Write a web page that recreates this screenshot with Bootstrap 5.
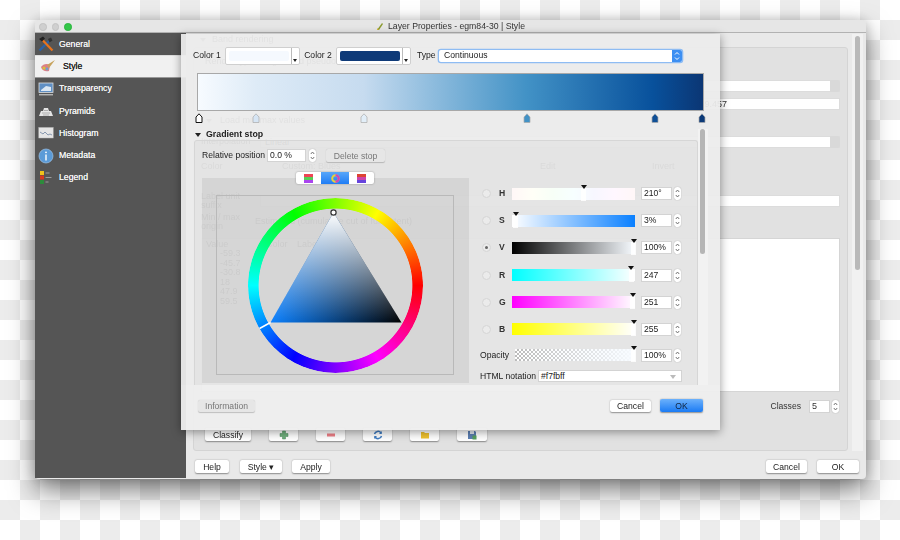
<!DOCTYPE html>
<html lang="en">
<head>
<meta charset="UTF-8">
<title>Layer Properties</title>
<link href="https://cdn.jsdelivr.net/npm/bootstrap@5.3.0/dist/css/bootstrap.min.css" rel="stylesheet">
<style>
  html, body { height: 100%; }
  body {
    margin: 0; overflow: hidden; font-family: "Liberation Sans", Arial, sans-serif; font-size: 8.5px; color: #222;
    background: conic-gradient(#ececec 25%, #fff 0 50%, #ececec 0 75%, #fff 0) 0 0 / 40px 40px;
  }
  .scene { position: relative; width: 900px; height: 540px; filter: blur(.45px); }

  /* main window */
  .win { position: absolute; left: 35px; top: 20px; width: 831px; height: 459px; background: #e9e9e9; border-radius: 4px; box-shadow: 0 12px 26px rgba(0,0,0,.5), 0 0 12px rgba(0,0,0,.18); }
  .titlebar { height: 13px; position: relative; background: #e6e6e6; border-bottom: 1px solid #b2b2b2; border-radius: 4px 4px 0 0; font-size: 8.7px; color: #333; padding-top: 1px; }
  .lights { position: absolute; left: 4px; top: 3px; gap: 5px; }
  .lights i { width: 7.5px; height: 7.5px; border-radius: 50%; background: #cfcfcf; border: 1px solid #c2c2c2; display: block; }
  .lights i.on { background: #33c748; border-color: #2bb53f; }
  .sidebar { width: 151px; background: #555; color: #f2f2f2; flex: none; }
  .side-item { height: 22.3px; padding-left: 3px; gap: 5px; font-size: 8.7px; text-shadow: 0 0 .5px #fff; }
  .side-item svg { width: 16px; height: 16px; flex: none; }
  .side-item.active { background: #f1f1f1; color: #222; padding-left: 5px; border-top: 1px solid #ddd; border-bottom: 1px solid #999; gap: 7px; text-shadow: 0 0 .5px #222; }

  /* the panel behind the dialog */
  .under { flex: 1; min-width: 0; position: relative; font-size: 9px; color: #333; }
  .under-scroll { height: 418px; padding-left: 7px; padding-right: 3px; }
  .under-col { flex: 1; min-width: 0; }
  .under-head { height: 14px; padding-left: 7px; gap: 6px; }
  .under-group { height: 404px; background: #e1e1e1; border: 1px solid #d4d4d4; border-radius: 3px; width: 655px; padding: 7px 7px 0 7px; }
  .urow { height: 14px; }
  .field { background: #fff; border: 1px solid #dcdcdc; height: 12px; line-height: 10px; }
  .u-combo { position: relative; }
  .u-combo::after { content: ""; position: absolute; right: -1px; top: -1px; bottom: -1px; width: 10px; background: #d9d9d9; border-radius: 0 3px 3px 0; }
  .u-scroll { width: 11px; margin-left: 3px; background: #f1f1f1; margin-top: 1px; position: relative; }
  .u-scroll::before { content: ""; position: absolute; left: 3px; top: 2px; width: 5px; height: 234px; border-radius: 3px; background: #b9b9b9; }
  .table-box { height: 154px; background: #fff; border: 1px solid #d5d5d5; }
  .under-foot { height: 27px; padding: 9px 7px 0 9px; }

  .qbtn { font-size: 8.6px; height: 13px; line-height: 12px; padding: 0; background: #fff; border: 0; border-radius: 2px; color: #222; box-shadow: 0 .5px 1.5px rgba(0,0,0,.4); flex: none; }
  .qbtn:disabled { background: #e6e6e6; color: #777; opacity: 1; box-shadow: 0 .5px 1px rgba(0,0,0,.2); }
  .qbtn.primary { background: linear-gradient(#6cb1fb, #1b7bf4); color: #10243e; }
  .qbtn svg { width: 10px; height: 10px; display: block; margin: 1.5px auto 0; }

  /* colour ramp dialog */
  .dlg { position: absolute; left: 146px; top: 14px; width: 539px; height: 396px; background: rgba(236,236,236,.945); box-shadow: 0 2px 9px rgba(0,0,0,.4); font-size: 8.6px; }
  .dlg-top { height: 18px; margin: 13px 0 0 12px; }
  .lbl { margin-bottom: 2px; flex: none; }
  .colbtn { height: 18px; width: 75px; background: #fff; border: 1px solid #cfcfcf; border-radius: 2px; position: relative; padding: 3px 10px 3px 3px; flex: none; }
  .colbtn b { display: block; height: 100%; border-radius: 2px; }
  .colbtn::after { content: ""; position: absolute; right: 0; top: 0; bottom: 0; width: 8px; border-left: 1px solid #bbb; }
  .colbtn::before { content: ""; position: absolute; right: 2px; bottom: 2px; border: 2.2px solid transparent; border-top: 3px solid #222; border-bottom: 0; }
  .type-combo { width: 243px; height: 12px; background: #fff; border-radius: 2px; box-shadow: 0 0 0 1.3px #8ebcf3; padding-left: 5px; line-height: 11px; position: relative; margin-left: 5px; flex: none; }
  .type-combo span { position: absolute; right: 0; top: 0; bottom: 0; width: 10px; background: #3d8ff2; border-radius: 0 2px 2px 0; }
  .type-combo svg { width: 10px; height: 12px; display: block; }
  .ramp { height: 38px; margin: 8px 16px 0 16px; border: 1px solid #a8a8a8; background: linear-gradient(90deg, #f7fbff 0%, #deebf7 11.5%, #c6dbef 32.8%, #4292c6 65%, #08519c 90%, #0b3674 100%); }
  .stops { position: relative; height: 12px; margin: 0 16px; }
  .stops svg { position: absolute; top: 1.5px; width: 8px; height: 10px; margin-left: -4px; }
  .gs-head { height: 13px; margin: 5px 0 0 14px; gap: 5px; font-weight: 700; font-size: 8.8px; }
  .tri-down { width: 0; height: 0; border: 3.5px solid transparent; border-top: 4.5px solid #222; border-bottom: 0; display: block; }
  .tri-down.soft { border-top-color: #777; }
  .gs-wrap { height: 245px; margin-left: 13px; margin-top: -1px; }
  .gs-box { width: 504px; height: 245px; background: rgba(0,0,0,.035); border: 1px solid #d6d6d6; border-bottom: 0; border-radius: 3px 3px 0 0; padding: 8px 0 0 7px; }
  .gs-scroll { width: 10px; background: #f2f2f2; position: relative; margin-top: -11px; height: 256px; }
  .gs-scroll::before { content: ""; position: absolute; left: 2px; top: 0; width: 5px; height: 125px; background: #b5b5b5; border-radius: 3px; }
  .spinbox { background: #fff; border: 1px solid #d3d3d3; height: 13px; line-height: 11px; padding-left: 2px; flex: none; }
  .spin { width: 7px; height: 13px; flex: none; margin-left: 2px; background: #fff; border-radius: 3px; box-shadow: 0 0 1px rgba(0,0,0,.4); display: block; }
  .wheel-panel { width: 267px; height: 205px; margin-top: 16px; background: rgba(0,0,0,.065); position: relative; padding: 17px 15px 8px 14px; flex: none; }
  .picker-tabs { position: absolute; left: 94px; top: -6px; width: 78px; height: 12px; background: #fff; border-radius: 2px; box-shadow: 0 0 2px rgba(0,0,0,.35); }
  .picker-tabs span { flex: 1; display: flex; align-items: center; justify-content: center; }
  .picker-tabs span.sel { background: linear-gradient(#58a6f9, #1f7df5); flex: none; width: 28px; }
  .picker-tabs svg { width: 9px; height: 9px; }
  .wheel-frame { height: 180px; border: 1px solid #b9b9b9; position: relative; }
  .wheel { position: absolute; left: 31px; top: 2px; width: 175px; height: 175px; border-radius: 50%;
    background: conic-gradient(from 90deg, #f00, #f0f, #00f, #0ff, #0f0, #ff0, #f00);
    -webkit-mask: radial-gradient(circle, transparent 76.5px, #000 77.3px);
    mask: radial-gradient(circle, transparent 76.5px, #000 77.3px); }
  .wheel-over { position: absolute; left: 31px; top: 2px; width: 175px; height: 175px; }
  .slider-col { width: 202px; margin-left: 11px; margin-top: 25px; flex: none; }
  .srow { height: 13px; margin-bottom: 14.2px; }
  .radio-dot { width: 9px; height: 9px; margin-left: 2px; border-radius: 50%; background: #ebebeb; border: 1px solid #d5d5d5; flex: none; position: relative; }
  .radio-dot.on::after { content: ""; position: absolute; left: 2px; top: 2px; width: 3px; height: 3px; border-radius: 50%; background: #666; }
  .srow .letter { width: 21px; padding-left: 8px; font-weight: 700; flex: none; color: #333; }
  .bar { width: 123px; height: 12px; position: relative; flex: none; }
  .bar i { position: absolute; top: -3px; margin-left: -3px; border: 3px solid transparent; border-top: 4px solid #111; border-bottom: 0; }
  .bar u { position: absolute; top: 0; bottom: -1px; width: 5px; margin-left: -2.5px; background: rgba(255,255,255,.85); }
  .b-h { background: linear-gradient(90deg, #fff7f7, #fffff7, #f7fff7, #f7ffff, #f7f7ff, #fff7ff, #fff7f7); }
  .b-s { background: linear-gradient(90deg, #fff, #0a80ff); }
  .b-v { background: linear-gradient(90deg, #000, #f7fbff); }
  .b-r { background: linear-gradient(90deg, #0ff, #fff); }
  .b-g { background: linear-gradient(90deg, #f0f, #fff); }
  .b-b { background: linear-gradient(90deg, #ff0, #fff); }
  .b-o { width: 120px; margin-left: 3px; background: linear-gradient(90deg, rgba(247,251,255,0), #f7fbff), conic-gradient(#bbb 25%, #fff 0 50%, #bbb 0 75%, #fff 0) 0 0 / 4px 4px; }
  .val { width: 31px; margin-left: 6px; }
  .dlg-foot { height: 45px; padding: 15px 17px 0 17px; background: rgba(255,255,255,.12); }
</style>
</head>
<body>
<svg width="0" height="0" class="position-absolute">
  <symbol id="chev" viewBox="0 0 7 13"><path d="M1.8 5 3.5 3 5.2 5M1.8 8 3.5 10 5.2 8" fill="none" stroke="#666" stroke-width=".9"/></symbol>
  <symbol id="chevw" viewBox="0 0 10 12"><path d="M3 4.500 5 2.500 7 4.500M3 7.500 5 9.500 7 7.500" fill="none" stroke="#fff" stroke-width="1"/></symbol>
  <symbol id="stop" viewBox="0 0 8 10"><path d="M1 9.5V4L4 .8 7 4v5.5z"/></symbol>
</svg>

<div class="scene">
  <div class="win">
    <div class="titlebar d-flex align-items-center justify-content-center">
      <div class="lights d-flex"><i></i><i></i><i class="on"></i></div>
      <svg width="8" height="9" viewBox="0 0 8 9" class="me-1"><path d="M1 8 6 1l1 1-4 6z" fill="#8a9a30"/><path d="M1 6l2 2H1z" fill="#d9b93b"/></svg>
      <span>Layer Properties - egm84-30 | Style</span>
    </div>

    <div class="d-flex" style="height:445px">
      <div class="sidebar">
        <div class="side-item d-flex align-items-center">
          <svg viewBox="0 0 16 16"><path d="M1.500 14.500 11 5" stroke="#2a62a8" stroke-width="2.400"/><path d="M14.500 14.500 4 3.500" stroke="#e8731c" stroke-width="2.200"/><path d="M1 3 5 .5l2 2-3 3z" fill="#222"/><path d="M10 3l3-1.500 1.500 3-3 2z" fill="#333"/></svg>
          <span>General</span>
        </div>
        <div class="side-item active d-flex align-items-center">
          <svg viewBox="0 0 16 16"><path d="M1 9c2-3 6-4 9-2l-1 6c-3 1-7 0-8-4z" fill="#dc7f86"/><circle cx="4" cy="10" r="1.500" fill="#d8c13c"/><circle cx="7" cy="11" r="1.400" fill="#6da3c9"/><path d="M7 7l8-5-6 8z" fill="#c7a35c"/></svg>
          <span>Style</span>
        </div>
        <div class="side-item d-flex align-items-center">
          <svg viewBox="0 0 16 16"><rect x="1" y="2" width="14" height="9.500" fill="#5f8fc4" stroke="#ddd" stroke-width=".8"/><path d="M3 9 8 5l5 1v4H3z" fill="#dbe7f3"/><path d="M1 13.800h14" stroke="#ddd" stroke-width="1"/></svg>
          <span>Transparency</span>
        </div>
        <div class="side-item d-flex align-items-center">
          <svg viewBox="0 0 16 16"><path d="M1 13l2-5h2l1-3h4l1 3h2l2 5z" fill="#e4e4e4"/><path d="M4 10h8M6 7.500h4M5 12h6" stroke="#888" stroke-width=".6"/></svg>
          <span>Pyramids</span>
        </div>
        <div class="side-item d-flex align-items-center">
          <svg viewBox="0 0 16 16"><rect x=".8" y="2.500" width="14.400" height="10.500" fill="#e5e5e5" stroke="#bbb" stroke-width=".5"/><path d="M2 7l3 2 2-2 3 3 2-1 2 1" fill="none" stroke="#7d8fa8" stroke-width=".9"/></svg>
          <span>Histogram</span>
        </div>
        <div class="side-item d-flex align-items-center">
          <svg viewBox="0 0 16 16"><circle cx="8" cy="8" r="7" fill="#5b9bd8" stroke="#9cc3e8" stroke-width=".7"/><path d="M8 6.500v6" stroke="#fff" stroke-width="1.400"/><circle cx="8" cy="4.300" r=".9" fill="#fff"/></svg>
          <span>Metadata</span>
        </div>
        <div class="side-item d-flex align-items-center">
          <svg viewBox="0 0 16 16"><rect x="2" y="1" width="4" height="4" fill="#f1c21b"/><rect x="2" y="5.500" width="4" height="4" fill="#d8391f"/><rect x="2" y="10" width="4" height="4" fill="#2c8b3b"/><path d="M7.500 3h4M7.500 7.500h6M7.500 12h3" stroke="#bbb" stroke-width=".7"/></svg>
          <span>Legend</span>
        </div>
      </div>

      <div class="under">
        <div class="under-scroll d-flex">
          <div class="under-col">
            <div class="under-head d-flex align-items-center"><i class="tri-down soft"></i><span>Band rendering</span></div>
            <div class="under-group">
              <div class="urow d-flex align-items-center ps-1"><span style="width:54px">Render type</span><span>Singleband pseudocolor</span></div>
              <div class="urow d-flex align-items-center" style="margin-top:10px"><span style="width:59px">Band</span><div class="field u-combo flex-grow-1 ps-1">Band 1 (Gray)</div></div>
              <div class="urow d-flex align-items-center" style="margin-top:4px"><span style="width:54px"></span><span style="width:145px">Min</span><div class="field ps-1" style="width:143px;background:transparent;border:0">-59.3378</div><span style="width:30px">Max</span><div class="field flex-grow-1 ps-1" style="text-align:right;padding-right:112px">59.457</div></div>
              <div class="urow d-flex align-items-center gap-2" style="padding-left:5px;margin-top:3px"><i class="tri-down soft"></i><span>Load min/max values</span></div>
              <div class="urow d-flex align-items-center" style="margin-top:7px"><span style="width:59px">Interpolation</span><div class="field u-combo flex-grow-1 ps-1">Linear</div></div>
              <div class="urow d-flex align-items-center" style="margin-top:11px"><span style="width:81px">Color</span><span style="width:258px">Custom: Blues</span><span style="width:112px">Edit</span><span>Invert</span></div>
              <div class="urow d-flex align-items-center" style="margin-top:16px;height:22px"><span style="width:59px;line-height:9px">Label unit<br>suffix</span><div class="field flex-grow-1"></div></div>
              <div class="urow d-flex align-items-center" style="margin-top:1px;height:18px"><span style="width:54px;line-height:9px">Min / max<br>origin</span><span>Estimated (cumulative cut of full extent)</span></div>
              <div class="table-box px-1" style="margin-top:7px">
                <div class="d-flex" style="line-height:10px"><span style="width:60px">Value</span><span style="width:31px">Color</span><span>Label</span></div>
                <div style="padding-left:14px;line-height:9.500px">-59.3<br>-45.7<br>-30.8<br>18<br>47.9<br>59.5</div>
              </div>
              <div class="d-flex align-items-center justify-content-end" style="height:13px;margin-top:8px;padding-right:1px"><span class="me-2" style="font-size:8.6px">Classes</span><div class="spinbox" style="width:21px">5</div><svg class="spin"><use href="#chev"/></svg></div>
              <div class="d-flex" style="margin-top:15px;padding-left:4px;gap:18px">
                <button class="btn qbtn" style="width:46px">Classify</button>
                <button class="btn qbtn" style="width:29px"><svg viewBox="0 0 10 10"><path d="M3.500 1h3v2.500H9v3H6.500V9h-3V6.500H1v-3h2.500z" fill="#6fb07d" stroke="#4c8a5a" stroke-width=".5"/></svg></button>
                <button class="btn qbtn" style="width:29px"><svg viewBox="0 0 10 10"><rect x="1" y="3.500" width="8" height="3" fill="#ee7f86"/></svg></button>
                <button class="btn qbtn" style="width:29px"><svg viewBox="0 0 10 10"><path d="M1.500 4a3.600 3.600 0 0 1 6.500-1M8.500 6a3.600 3.600 0 0 1-6.500 1" fill="none" stroke="#3f7cc2" stroke-width="1.500"/><path d="M8.800 1v3H6zM1.200 9V6H4z" fill="#3f7cc2"/></svg></button>
                <button class="btn qbtn" style="width:29px"><svg viewBox="0 0 10 10"><path d="M1 2h3l1 1h4v5.500H1z" fill="#f0c22f"/></svg></button>
                <button class="btn qbtn" style="width:30px"><svg viewBox="0 0 10 10"><path d="M1 1h7l1 1v7H1z" fill="#5c7fb3"/><rect x="3" y="1" width="4" height="3" fill="#dfe6f0"/><rect x="5.500" y="5.500" width="4" height="4" fill="#55a05f"/></svg></button>
              </div>
            </div>
          </div>
          <div class="u-scroll"></div>
        </div>
        <div class="under-foot d-flex">
          <button class="btn qbtn" style="width:34px">Help</button>
          <button class="btn qbtn" style="width:42px;margin-left:11px">Style &#9662;</button>
          <button class="btn qbtn" style="width:38px;margin-left:10px">Apply</button>
          <button class="btn qbtn ms-auto" style="width:41px">Cancel</button>
          <button class="btn qbtn" style="width:42px;margin-left:10px">OK</button>
        </div>
      </div>
    </div>

    <!-- Gradient editor dialog -->
    <div class="dlg d-flex flex-column">
      <div class="dlg-top d-flex align-items-center">
        <span class="lbl" style="width:32px">Color 1</span>
        <div class="colbtn"><b style="background:#f5f9fe"></b></div>
        <span class="lbl text-center" style="width:36px">Color 2</span>
        <div class="colbtn"><b style="background:#0f3a78"></b></div>
        <span class="lbl" style="margin-left:6px;width:17px">Type</span>
        <div class="type-combo">Continuous<span><svg><use href="#chevw"/></svg></span></div>
      </div>
      <div class="ramp"></div>
      <div class="stops">
        <svg style="left:.3%;fill:#fff;stroke:#111;stroke-width:1"><use href="#stop"/></svg>
        <svg style="left:11.7%;fill:#d6e5f4;stroke:#aaa;stroke-width:.7"><use href="#stop"/></svg>
        <svg style="left:32.9%;fill:#e2eef8;stroke:#aaa;stroke-width:.7"><use href="#stop"/></svg>
        <svg style="left:65.1%;fill:#4292c6;stroke:#aaa;stroke-width:.7"><use href="#stop"/></svg>
        <svg style="left:90.4%;fill:#0f4f96;stroke:#aaa;stroke-width:.7"><use href="#stop"/></svg>
        <svg style="left:99.7%;fill:#0c3a78;stroke:#aaa;stroke-width:.7"><use href="#stop"/></svg>
      </div>
      <div class="gs-head d-flex align-items-center"><i class="tri-down"></i><span>Gradient stop</span></div>
      <div class="gs-wrap d-flex">
        <div class="gs-box">
          <div class="d-flex align-items-center">
            <span style="width:65px">Relative position</span>
            <div class="spinbox" style="width:39px">0.0 %</div>
            <svg class="spin" style="margin-left:3px"><use href="#chev"/></svg>
            <button class="btn qbtn" style="width:59px;margin-left:10px" disabled>Delete stop</button>
          </div>
          <div class="d-flex">
            <div class="wheel-panel">
              <div class="picker-tabs d-flex">
                <span><svg viewBox="0 0 9 9"><rect width="9" height="9" fill="#e45"/><rect y="3" width="9" height="3" fill="#5c5"/><rect y="6" width="9" height="3" fill="#a4e"/></svg></span>
                <span class="sel"><svg viewBox="0 0 9 9"><circle cx="4.500" cy="4.500" r="3.300" fill="none" stroke="#e6d23a" stroke-width="2"/><path d="M4.500 1.200a3.300 3.300 0 0 1 0 6.600" fill="none" stroke="#d33cc0" stroke-width="2"/></svg></span>
                <span><svg viewBox="0 0 9 9"><rect width="9" height="3" fill="#d43"/><rect y="3" width="9" height="3" fill="#c4a"/><rect y="6" width="9" height="3" fill="#64d"/></svg></span>
              </div>
              <div class="wheel-frame">
                <div class="wheel"></div>
                <svg class="wheel-over" viewBox="247.500 198.500 175 175">
                  <defs>
                    <linearGradient id="triWhite" x1="0" x2="0" y1="213" y2="323" gradientUnits="userSpaceOnUse"><stop offset="0" stop-color="#fff"/><stop offset="1" stop-color="#fff" stop-opacity="0"/></linearGradient>
                    <linearGradient id="triHue" x1="270" x2="401" y1="0" y2="0" gradientUnits="userSpaceOnUse"><stop offset="0" stop-color="#0a80ff"/><stop offset="1" stop-color="#000"/></linearGradient>
                  </defs>
                  <path d="M333 213 270 323H401z" fill="url(#triHue)"/>
                  <path d="M333 213 270 323H401z" fill="url(#triWhite)"/>
                  <path d="M259 329 270 323" stroke="#fff" stroke-width="1.500"/>
                  <circle cx="333" cy="213" r="2.600" fill="#fff" stroke="#333" stroke-width="1.200"/>
                </svg>
              </div>
            </div>
            <div class="slider-col">
              <div class="srow d-flex align-items-center"><span class="radio-dot"></span><span class="letter">H</span><div class="bar b-h"><u style="left:58.500%"></u><i style="left:58.500%"></i></div><div class="spinbox val">210&deg;</div><svg class="spin"><use href="#chev"/></svg></div>
              <div class="srow d-flex align-items-center"><span class="radio-dot"></span><span class="letter">S</span><div class="bar b-s"><u style="left:3%"></u><i style="left:3%"></i></div><div class="spinbox val">3%</div><svg class="spin"><use href="#chev"/></svg></div>
              <div class="srow d-flex align-items-center"><span class="radio-dot on"></span><span class="letter">V</span><div class="bar b-v"><u style="left:99%"></u><i style="left:99%"></i></div><div class="spinbox val">100%</div><svg class="spin"><use href="#chev"/></svg></div>
              <div class="srow d-flex align-items-center"><span class="radio-dot"></span><span class="letter">R</span><div class="bar b-r"><u style="left:97%"></u><i style="left:97%"></i></div><div class="spinbox val">247</div><svg class="spin"><use href="#chev"/></svg></div>
              <div class="srow d-flex align-items-center"><span class="radio-dot"></span><span class="letter">G</span><div class="bar b-g"><u style="left:98%"></u><i style="left:98%"></i></div><div class="spinbox val">251</div><svg class="spin"><use href="#chev"/></svg></div>
              <div class="srow d-flex align-items-center" style="margin-bottom:13px"><span class="radio-dot"></span><span class="letter">B</span><div class="bar b-b"><u style="left:99%"></u><i style="left:99%"></i></div><div class="spinbox val">255</div><svg class="spin"><use href="#chev"/></svg></div>
              <div class="srow d-flex align-items-center" style="margin-bottom:8px"><span style="width:32px">Opacity</span><div class="bar b-o"><u style="left:99%"></u><i style="left:99%"></i></div><div class="spinbox val">100%</div><svg class="spin"><use href="#chev"/></svg></div>
              <div class="d-flex align-items-center"><span style="width:58px">HTML notation</span><div class="spinbox position-relative flex-grow-1" style="height:12px;flex-shrink:1">#f7fbff<span class="position-absolute" style="right:5px;top:4px;border:3px solid transparent;border-top:4px solid #bbb;border-bottom:0"></span></div></div>
            </div>
          </div>
        </div>
        <div class="gs-scroll"></div>
      </div>
      <div class="dlg-foot d-flex align-items-start">
        <button class="btn qbtn" style="width:57px;height:12px" disabled>Information</button>
        <button class="btn qbtn ms-auto" style="width:41px;height:12px">Cancel</button>
        <button class="btn qbtn primary" style="width:43px;margin-left:9px;margin-top:-1px">OK</button>
      </div>
    </div>
  </div>
</div>
<script src="https://cdn.jsdelivr.net/npm/bootstrap@5.3.0/dist/js/bootstrap.bundle.min.js"></script>
</body>
</html>
